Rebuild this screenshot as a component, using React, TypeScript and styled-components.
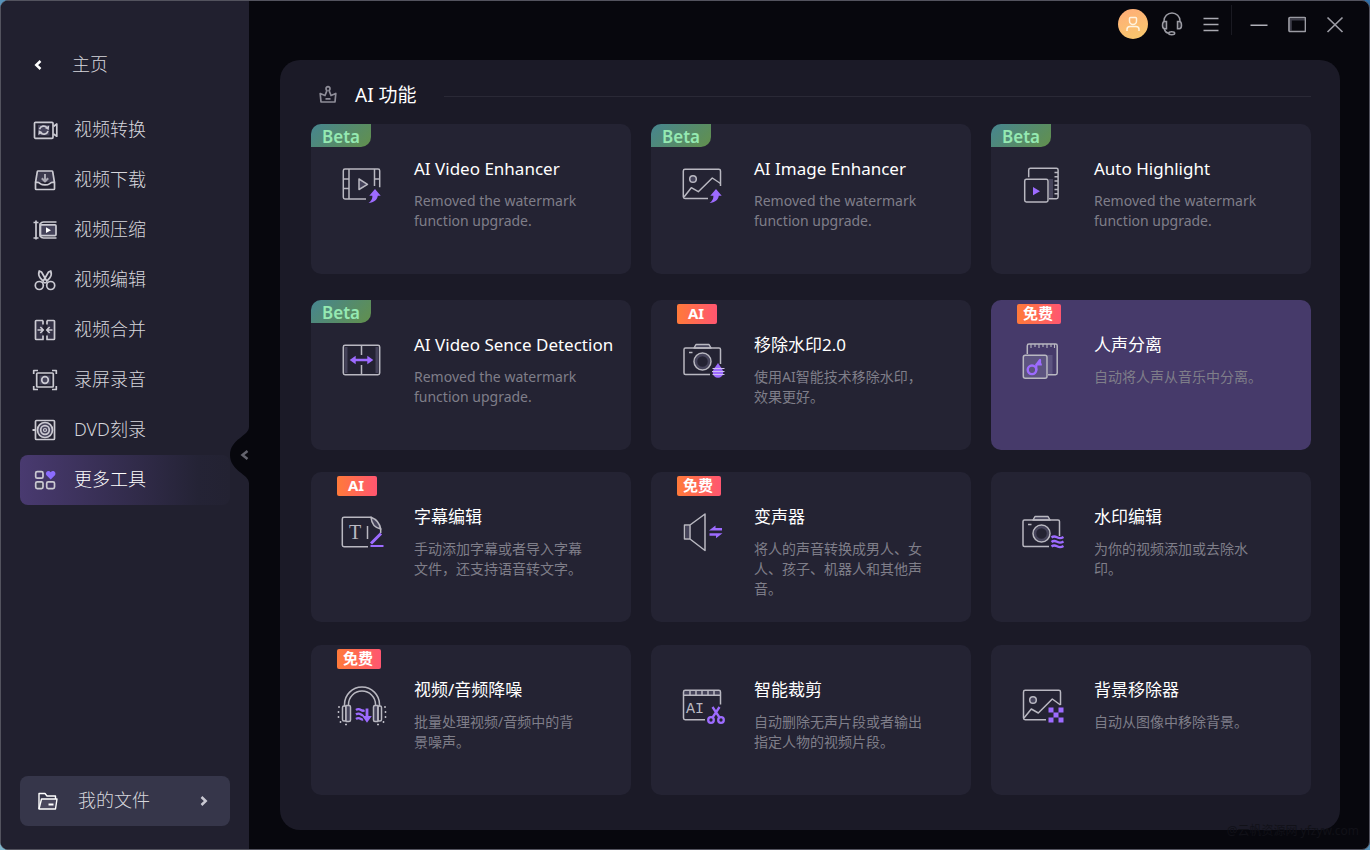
import React from "react";
import styled, { createGlobalStyle, css } from "styled-components";

const GlobalStyle = createGlobalStyle`
  *, *::before, *::after { box-sizing: border-box; }
  body {
    margin: 0;
    background: linear-gradient(to top right, #7fb6cc, #2f6fa8);
    font-family: "Noto Sans", "Noto Sans CJK SC", sans-serif;
    color: #d6d6dc;
  }
  button { font: inherit; color: inherit; border: 0; padding: 0; background: none; cursor: pointer; text-align: left; }
  ul { list-style: none; margin: 0; padding: 0; }
  svg { display: block; flex: none; }
`;

const Window = styled.div`
  position: relative;
  display: flex;
  min-height: 100vh;
  border: 1px solid #53535e;
  border-radius: 8px;
  background: #07070d;
  overflow: hidden;
`;

/* ---------- sidebar ---------- */

const Sidebar = styled.aside`
  position: relative;
  display: flex;
  flex: none;
  flex-direction: column;
  width: 248px;
  padding: 39px 19px 23px;
  background: #21202f;
`;

const HomeButton = styled.button`
  display: flex;
  align-items: center;
  gap: 28px;
  height: 50px;
  margin-bottom: 15px;
  padding-left: 12px;
  font-size: 18px;
  font-weight: 300;
`;

const NavList = styled.ul`
  display: flex;
  flex-direction: column;
`;

const NavButton = styled.button<{ $active?: boolean }>`
  display: flex;
  align-items: center;
  gap: 16px;
  width: 100%;
  height: 50px;
  padding-left: 12px;
  border-radius: 8px;
  font-size: 18px;
  font-weight: 300;
  ${(p) =>
    p.$active &&
    css`
      color: #fff;
      background: linear-gradient(90deg, #493a70 0%, #242335 85%, #232232 100%);
    `}
`;

const NavLabel = styled.span`
  line-height: 24px;
  padding-bottom: 2px;
`;

const FilesButton = styled.button`
  display: flex;
  align-items: center;
  height: 50px;
  margin-top: auto;
  padding: 0 20px 0 16px;
  gap: 18px;
  border-radius: 8px;
  background: #36364a;
  font-size: 18px;
  font-weight: 300;
`;

const FilesLabel = styled(NavLabel)`
  flex: 1;
`;

const CollapseButton = styled.button`
  position: absolute;
  top: 426px;
  right: 0;
`;

/* ---------- main area ---------- */

const Main = styled.main`
  display: flex;
  flex: 1;
  flex-direction: column;
  min-width: 0;
  padding: 0 29px 19px 31px;
`;

const TopBar = styled.header`
  display: flex;
  justify-content: flex-end;
  height: 59px;
  padding-top: 8px;
  margin-right: -10px;
`;

const ControlGroup = styled.div<{ $gap: number }>`
  display: flex;
  gap: ${(p) => p.$gap}px;
`;

const ControlButton = styled.button`
  display: flex;
  align-items: center;
  justify-content: center;
  width: 30px;
  height: 30px;
`;

const Avatar = styled(ControlButton)`
  border-radius: 50%;
  background: linear-gradient(160deg, #ffac78, #f8ca6c);
`;

const Divider = styled.span`
  width: 1px;
  height: 30px;
  margin: -4px 12px 0 5px;
  background: #1a1a22;
`;

const Panel = styled.section`
  flex: 1;
  padding: 0 29px 35px 31px;
  border-radius: 20px;
  background: #1b1a27;
`;

const PanelHeader = styled.div`
  display: flex;
  align-items: center;
  height: 64px;
  padding: 6px 0 0 7px;
`;

const PanelTitle = styled.h1`
  margin: 0 27px 0 17px;
  font-size: 19px;
  line-height: 28px;
  font-weight: 400;
  color: #fff;
`;

const Rule = styled.span`
  flex: 1;
  height: 1px;
  margin-top: 2px;
  background: #2a2936;
`;

const CardGrid = styled.ul`
  display: grid;
  grid-template-columns: repeat(3, minmax(0, 1fr));
  grid-template-rows: 176px 172px 173px auto;
  column-gap: 20px;
  align-items: start;
`;

const Card = styled.button<{ $highlighted?: boolean }>`
  position: relative;
  display: flex;
  align-items: flex-start;
  gap: 28px;
  width: 100%;
  height: 150px;
  padding: 33px 0 0 27px;
  border-radius: 10px;
  background: ${(p) => (p.$highlighted ? "#463a6a" : "#242333")};
`;

const IconSlot = styled.span`
  padding-top: 4px;
`;

const CardText = styled.span`
  display: flex;
  flex-direction: column;
  gap: 10px;
`;

const CardTitle = styled.span`
  font-size: 17px;
  line-height: 24px;
  color: #fff;
  white-space: nowrap;
`;

const CardDescription = styled.span`
  max-width: 170px;
  font-size: 14px;
  line-height: 20px;
  color: #7f7e89;
`;

const BetaBadge = styled.span`
  position: absolute;
  top: 0;
  left: 0;
  width: 60px;
  height: 23px;
  border-radius: 10px 0 10px 0;
  background: linear-gradient(135deg, #468590, #62904c);
  color: #95e9b2;
  font-size: 17px;
  line-height: 26px;
  font-weight: 600;
  text-align: center;
`;

const TagBadge = styled.span<{ $wide: boolean }>`
  position: absolute;
  top: 4px;
  left: 26px;
  width: ${(p) => (p.$wide ? 44 : 40)}px;
  height: 20px;
  padding-right: 2px;
  border-radius: 2px;
  background: linear-gradient(90deg, #ff7a3a, #ff5670);
  color: #fff;
  font-size: 15px;
  line-height: 18px;
  font-weight: 700;
  text-align: center;
`;

const Credit = styled.span`
  position: absolute;
  right: 10px;
  bottom: 9px;
  font-size: 12px;
  line-height: 18px;
  color: #111118;
`;

/* ---------- icons ---------- */

const LINE = "#b9b8c1";
const PURPLE = "#9d6bff";
const SHADE = "#45435a";

const NavSvg = ({ children }: { children: React.ReactNode }) => (
  <svg width="26" height="26" viewBox="0 0 26 26" fill="none" stroke="#cbcad2" strokeWidth="1.7" strokeLinejoin="round" aria-hidden="true">
    {children}
  </svg>
);

const ToolSvg = ({ children }: { children: React.ReactNode }) => (
  <svg width="48" height="48" viewBox="0 0 48 48" fill="none" stroke={LINE} strokeWidth="1.5" strokeLinejoin="round" overflow="visible" aria-hidden="true">
    {children}
  </svg>
);

const navIcons = {
  convert: (
    <NavSvg>
      <rect x="2.5" y="5.3" width="18.5" height="16" rx="1" />
      <rect x="6" y="8" width="11.5" height="10.5" fill={SHADE} stroke="none" />
      <path d="M21.5 9.5L24.8 7v12.2L21.5 17" />
      <path d="M7.5 12.2a4.3 4.3 0 0 1 7.6-1.4M16 14a4.3 4.3 0 0 1-7.6 1.4" />
      <path d="M17.2 8.5l-.5 4.6-3.9-2zM6.3 17.900l.5-4.600 3.900 2z" fill="#cbcad2" stroke="none" />
    </NavSvg>
  ),
  download: (
    <NavSvg>
      <path d="M3.6 15L5.3 4.6c.1-.5.3-.6.8-.6h13.800c.5 0 .7.1.8.6L22.400 15" fill="#3b394d" />
      <path d="M3.5 15.2c3 0 3.7.2 5.2 1.7 1.5 1.4 7 1.4 8.600 0 1.500-1.500 2.200-1.700 5.200-1.700v6.500c0 .5-.3.8-.8.8H4.300c-.5 0-.8-.3-.8-.8z" fill="#21202f" />
      <path d="M13 7v7M9.800 11.300l3.200 3.200 3.200-3.200" stroke="#a9a8b3" strokeWidth="2" />
    </NavSvg>
  ),
  compress: (
    <NavSvg>
      <path d="M1.500 5.500h5M1.500 21h5M4 3.500v19" />
      <path d="M24.500 5h-13Q9.500 5 8 7v12q1.500 2 3.500 2h13" />
      <rect x="8.500" y="7.800" width="15.500" height="10.800" rx="1" fill={SHADE} />
      <path d="M14 10.300v5.800l5-2.900z" fill="#fff" stroke="none" />
    </NavSvg>
  ),
  edit: (
    <NavSvg>
      <circle cx="7.300" cy="18.500" r="4" />
      <circle cx="18.700" cy="18.500" r="4" />
      <path d="M10.300 15.700l6.200-10.700 2.300-1c1 2.800.5 5-1.200 7.200l-4.600 5M15.700 15.700L9.500 5l-2.300-1c-1 2.800-.5 5 1.200 7.200l4.600 5" />
    </NavSvg>
  ),
  merge: (
    <NavSvg>
      <path d="M11 3.500H4.300c-.5 0-.8.3-.8.8v17.400c0 .5.3.8.8.8H11v-4M11 3.500v4M15 3.500h6.700c.5 0 .8.3.8.8v17.400c0 .5-.3.8-.8.8H15v-4M15 3.500v4" fill="#343246" />
      <path d="M5.500 13h5M8.300 10l3 3-3 3M20.500 13h-5M17.700 10l-3 3 3 3" />
    </NavSvg>
  ),
  record: (
    <NavSvg>
      <path d="M1.700 7V3.500H6M20 3.500h4.300V7M24.300 19v3.500H20M6 22.500H1.700V19" />
      <rect x="4.700" y="6" width="16.600" height="14" rx="1" />
      <rect x="7.500" y="8.500" width="11" height="9" fill={SHADE} stroke="none" />
      <circle cx="13" cy="13" r="3.300" />
    </NavSvg>
  ),
  disc: (
    <NavSvg>
      <rect x="3.500" y="3.500" width="19" height="19" rx="1" />
      <path d="M.5 13h3" strokeWidth="2" />
      <circle cx="13" cy="13" r="7.500" fill={SHADE} />
      <circle cx="13" cy="13" r="4.300" />
      <circle cx="13" cy="13" r="1.500" strokeWidth="1.200" />
    </NavSvg>
  ),
  more: (
    <NavSvg>
      <rect x="3.700" y="4.700" width="7.300" height="6.500" rx="1.500" />
      <rect x="3.700" y="14.800" width="7.300" height="6.800" rx="1.500" fill={SHADE} />
      <rect x="14.700" y="14.800" width="7.800" height="6.800" rx="1.500" />
      <path d="M18.700 12.600l-4-4c-2.500-3 1.700-6.400 4-3.300 2.300-3.100 6.500.3 4 3.300z" fill="#8b6cff" stroke="none" />
    </NavSvg>
  ),
};

const UpArrow = () => (
  <path d="M37 28l5.700 6.800h-2.900c-.5 4-3.800 6.700-9.200 7.200 2.700-1.800 3.900-4.200 3.800-7.200h-3.100z" fill={PURPLE} stroke="none" />
);

const Camera = () => (
  <>
    <path d="M16 11l2-3.500h13l2 3.500z" fill={SHADE} />
    <path d="M42.500 27V12.500c0-1-.5-1.500-1.500-1.500H7.500c-1 0-1.500.5-1.500 1.500V36c0 1 .5 1.500 1.500 1.500H32" />
    <circle cx="24.500" cy="24.500" r="6.500" stroke={SHADE} strokeWidth="2.500" />
    <circle cx="24.500" cy="24.500" r="8.500" />
    <path d="M11 15.500h3.500" />
  </>
);

const toolIcons = {
  videoEnhancer: (
    <ToolSvg>
      <path d="M28 38H7c-1 0-1.700-.7-1.700-1.700V9.700C5.300 8.700 6 8 7 8h33c1 0 1.700.7 1.700 1.700v16.500" />
      <path d="M11 8v30M36.500 8v17M5.300 18H11M5.300 27.500H11M36.500 18h5" />
      <path d="M21 18v10.500l8.500-5.200z" fill={SHADE} />
      <UpArrow />
    </ToolSvg>
  ),
  imageEnhancer: (
    <ToolSvg>
      <path d="M30 37.500H7c-1 0-1.700-.7-1.700-1.700V10c0-1 .7-1.700 1.700-1.700h33.800c1 0 1.700.7 1.700 1.700v15" />
      <circle cx="15" cy="18" r="3.300" fill={SHADE} />
      <path d="M6 36l7.300-9.300 7 4L34.300 17l8.200 5.500" />
      <g transform="translate(1 0)">
        <UpArrow />
      </g>
    </ToolSvg>
  ),
  highlight: (
    <ToolSvg>
      <rect x="31" y="18" width="4" height="19" fill={SHADE} stroke="none" />
      <path d="M10.700 16.300V9c0-1 .7-1.700 1.700-1.700h26c1 0 1.700.7 1.700 1.700v27c0 1-.7 1.700-1.700 1.700H31" />
      <path d="M36.500 11.500H40M36.500 15.800H40M36.500 20H40M36.500 24.300H40M36.500 28.500H40M36.500 32.800H40" />
      <rect x="6.700" y="18.300" width="23.300" height="22.700" rx="1.700" />
      <path d="M15 26v8.300l7-4.100z" fill={PURPLE} stroke="none" />
    </ToolSvg>
  ),
  detection: (
    <ToolSvg>
      <path d="M8 10v26M39 10v26" stroke={SHADE} strokeWidth="3" />
      <rect x="5.300" y="8.300" width="36.400" height="29.400" rx="1.700" />
      <path d="M23.500 8.300V18M23.500 28v9.700" />
      <path d="M11.700 23l6-4.300v3h11.600v-3l6 4.300-6 4.300v-3H17.700v3z" fill={PURPLE} stroke="none" />
    </ToolSvg>
  ),
  watermarkRemove: (
    <ToolSvg>
      <Camera />
      <path d="M40 26c2 3.300 5.300 6.500 5.300 9.500a5.300 5.300 0 0 1-10.600 0C34.700 32.500 38 29.300 40 26z" fill={PURPLE} stroke="none" />
      <path d="M34.500 31.500h12M34 34.500h12.500M34.500 37.500h12" strokeWidth="1.100" stroke="#cdbcf2" />
    </ToolSvg>
  ),
  vocals: (
    <ToolSvg>
      <rect x="29.500" y="18" width="5" height="19" fill="#5d5480" stroke="none" />
      <path d="M9.300 17V8.700C9.300 7.700 10 7 11 7h26.500c1 0 1.700.7 1.700 1.700V36c0 1-.7 1.700-1.700 1.700H30" />
      <path d="M13 7v4M17 7v3M21 7v4M25 7v3M29 7v4M33 7v3M36.500 7v4" strokeWidth="1.100" />
      <rect x="5.300" y="18.300" width="23.700" height="22.900" rx="2" fill="#5d5480" />
      <circle cx="14" cy="32.800" r="4.300" stroke={PURPLE} strokeWidth="2.400" />
      <path d="M18.300 33.500V27.500h5.500M18.300 28l3.700-5v5" stroke={PURPLE} strokeWidth="2.200" />
    </ToolSvg>
  ),
  subtitle: (
    <ToolSvg>
      <path d="M30 37.700H6c-1 0-1.700-.7-1.700-1.700V10c0-1 .7-1.700 1.700-1.700h27L42.700 20v4" />
      <path d="M33 8.300c.5 6 3.500 10.500 9.700 11.700-1-5.500-4-9.500-9.700-11.700z" fill={SHADE} />
      <text x="11" y="30" fontFamily="Liberation Serif, serif" fontSize="20" fill={LINE} stroke="none">T</text>
      <path d="M29.500 17v13" />
      <path d="M33 34.500l10-10" stroke={PURPLE} strokeWidth="3" />
      <path d="M32.500 37h13" stroke={PURPLE} strokeWidth="2" />
    </ToolSvg>
  ),
  voiceChanger: (
    <ToolSvg>
      <path d="M9.500 17v12" stroke={SHADE} strokeWidth="3" />
      <path d="M12 16v14H6.500V16zM12 16L27 5v36.500L12 30" />
      <path d="M31 21.500l6.500-5V19H44v2.500zM44.500 24.300l-6.500 5v-2.500h-6.500v-2.500z" fill={PURPLE} stroke="none" />
    </ToolSvg>
  ),
  watermarkEdit: (
    <ToolSvg>
      <g transform="translate(-1 0)">
        <Camera />
      </g>
      <path d="M33.500 28.500c2.500-2 4-1 6 0s3.500 1 6-.5M33.500 33c2.500-2 4-1 6 0s3.500 1 6-.5M33.500 37.500c2.500-2 4-1 6 0s3.500 1 6-.5" stroke={PURPLE} strokeWidth="2.400" />
    </ToolSvg>
  ),
  denoise: (
    <ToolSvg>
      <path d="M6.500 24v-1.500a17.500 17.500 0 0 1 35 0V24M10.500 24v-1.500a13.500 13.500 0 0 1 27 0V24" />
      <rect x="4.500" y="24" width="3.500" height="15" rx="1.500" />
      <path d="M8 23.500h3c1 0 1.500.5 1.500 1.500v13c0 1-.5 1.500-1.500 1.500H8zM40 23.500h-3c-1 0-1.500.5-1.500 1.500v13c0 1 .5 1.500 1.500 1.500h3z" fill={SHADE} />
      <rect x="40" y="24" width="3.500" height="15" rx="1.500" />
      <path d="M1 24v2M.5 29v2M.5 34v2M2.500 39v2M47 24v2M47.500 29v2M47.500 34v2M45.500 39v2M7 42.500h2M39 42.500h2" />
      <path d="M18 28c2-1.500 3.500-1 5 0s2.500.8 3.500.3M18 32.500c2-1.500 3.500-1 5 0s2 .8 2.500.3M18 37c2-1.500 3.500-1 5 0s1.500.6 2 .4" stroke={PURPLE} strokeWidth="2.400" />
      <path d="M27.600 26.500V34h-3.400l4.800 6.700 4.800-6.700h-3.400v-7.500z" fill={PURPLE} stroke="none" />
    </ToolSvg>
  ),
  smartCrop: (
    <ToolSvg>
      <rect x="6" y="9" width="36" height="4" fill={SHADE} stroke="none" />
      <path d="M27 37.700H7.200c-1 0-1.700-.7-1.700-1.700V10c0-1 .7-1.700 1.700-1.700h33.600c1 0 1.700.7 1.700 1.700v12.500" />
      <path d="M5.500 13.300h37M12 8.300v5M18 8.300v5M24 8.300v5M30 8.300v5M36 8.300v5" />
      <text x="8" y="31" fontFamily="Liberation Mono, monospace" fontSize="15" fill={LINE} stroke="none">AI</text>
      <circle cx="33" cy="38" r="2.800" stroke={PURPLE} strokeWidth="2.300" />
      <circle cx="43" cy="38" r="2.800" stroke={PURPLE} strokeWidth="2.300" />
      <path d="M34.500 35.500L41.500 25M41.500 35.500L34.500 25" stroke={PURPLE} strokeWidth="2.300" />
    </ToolSvg>
  ),
  background: (
    <ToolSvg>
      <path d="M28 37.700H7.200c-1 0-1.700-.7-1.700-1.700V10c0-1 .7-1.700 1.700-1.700h33.600c1 0 1.700.7 1.700 1.700v13" />
      <circle cx="15" cy="18" r="3.300" fill={SHADE} />
      <path d="M6 36l7.300-9 7 4L34.300 17l8.200 6" />
      <path d="M30.500 25.500h5v5h-5zM40.500 25.500h5v5h-5zM35.500 30.500h5v5h-5zM30.500 35.500h5v5h-5zM40.500 35.500h5v5h-5z" fill={PURPLE} stroke="none" />
    </ToolSvg>
  ),
};

/* ---------- data ---------- */

const navItems: { label: string; icon: keyof typeof navIcons; active?: boolean }[] = [
  { label: "视频转换", icon: "convert" },
  { label: "视频下载", icon: "download" },
  { label: "视频压缩", icon: "compress" },
  { label: "视频编辑", icon: "edit" },
  { label: "视频合并", icon: "merge" },
  { label: "录屏录音", icon: "record" },
  { label: "DVD刻录", icon: "disc" },
  { label: "更多工具", icon: "more", active: true },
];

type Tool = {
  title: string;
  text: string;
  icon: keyof typeof toolIcons;
  badge?: "Beta" | "AI" | "免费";
  highlighted?: boolean;
};

const tools: Tool[] = [
  { title: "AI Video Enhancer", text: "Removed the watermark function upgrade.", icon: "videoEnhancer", badge: "Beta" },
  { title: "AI Image Enhancer", text: "Removed the watermark function upgrade.", icon: "imageEnhancer", badge: "Beta" },
  { title: "Auto Highlight", text: "Removed the watermark function upgrade.", icon: "highlight", badge: "Beta" },
  { title: "AI Video Sence Detection", text: "Removed the watermark function upgrade.", icon: "detection", badge: "Beta" },
  { title: "移除水印2.0", text: "使用AI智能技术移除水印，效果更好。", icon: "watermarkRemove", badge: "AI" },
  { title: "人声分离", text: "自动将人声从音乐中分离。", icon: "vocals", badge: "免费", highlighted: true },
  { title: "字幕编辑", text: "手动添加字幕或者导入字幕文件，还支持语音转文字。", icon: "subtitle", badge: "AI" },
  { title: "变声器", text: "将人的声音转换成男人、女人、孩子、机器人和其他声音。", icon: "voiceChanger", badge: "免费" },
  { title: "水印编辑", text: "为你的视频添加或去除水印。", icon: "watermarkEdit" },
  { title: "视频/音频降噪", text: "批量处理视频/音频中的背景噪声。", icon: "denoise", badge: "免费" },
  { title: "智能裁剪", text: "自动删除无声片段或者输出指定人物的视频片段。", icon: "smartCrop" },
  { title: "背景移除器", text: "自动从图像中移除背景。", icon: "background" },
];

const ToolCard = ({ tool }: { tool: Tool }) => (
  <Card type="button" $highlighted={tool.highlighted}>
    {tool.badge === "Beta" && <BetaBadge>Beta</BetaBadge>}
    {tool.badge && tool.badge !== "Beta" && <TagBadge $wide={tool.badge === "免费"}>{tool.badge}</TagBadge>}
    <IconSlot>{toolIcons[tool.icon]}</IconSlot>
    <CardText>
      <CardTitle>{tool.title}</CardTitle>
      <CardDescription>{tool.text}</CardDescription>
    </CardText>
  </Card>
);

export default function App() {
  return (
    <>
      <GlobalStyle />
      <Window lang="zh-CN">
        <Sidebar>
          <HomeButton type="button">
            <svg width="12" height="12" viewBox="0 0 12 12" fill="none" stroke="#fff" strokeWidth="2.500" aria-hidden="true">
              <path d="M8.500 2L4.300 6l4.200 4" />
            </svg>
            <NavLabel>主页</NavLabel>
          </HomeButton>
          <nav>
            <NavList>
              {navItems.map((item) => (
                <li key={item.label}>
                  <NavButton type="button" $active={item.active} aria-current={item.active ? "page" : undefined}>
                    {navIcons[item.icon]}
                    <NavLabel>{item.label}</NavLabel>
                  </NavButton>
                </li>
              ))}
            </NavList>
          </nav>
          <FilesButton type="button">
            <svg width="24" height="24" viewBox="0 0 24 24" fill="none" stroke="#fff" strokeWidth="1.400" strokeLinejoin="round" aria-hidden="true">
              <path d="M3 20V4.500h6l2 2.500h8.500v3" />
              <path d="M3 20l2.500-10h15.500l-1.500 10z" fill="#4a485e" />
              <path d="M12.500 15.500h5" strokeWidth="2" />
            </svg>
            <FilesLabel>我的文件</FilesLabel>
            <svg width="12" height="12" viewBox="0 0 12 12" fill="none" stroke="#c9c8d2" strokeWidth="2.500" aria-hidden="true">
              <path d="M3.500 2l4.200 4-4.200 4" />
            </svg>
          </FilesButton>
          <CollapseButton type="button" aria-label="收起侧栏">
            <svg width="19" height="56" viewBox="0 0 19 56" aria-hidden="true">
              <path d="M19 0C19 9 0 12 0 28s19 19 19 28z" fill="#07070d" />
              <path d="M17.500 24l-5 4 5 4" fill="none" stroke="#63636d" strokeWidth="2.500" />
            </svg>
          </CollapseButton>
        </Sidebar>

        <Main>
          <TopBar>
            <ControlGroup $gap={9}>
              <Avatar type="button" aria-label="账户">
                <svg width="16" height="16" viewBox="0 0 16 16" fill="none" stroke="#fff3df" strokeWidth="1.500" aria-hidden="true">
                  <path d="M5.500 1.500h5a1 1 0 0 1 1 1V5a3.500 3.500 0 0 1-7 0V2.500a1 1 0 0 1 1-1z" />
                  <path d="M2 15v-1.500c0-2 1.200-3 3-3h6c1.800 0 3 1 3 3V15" />
                </svg>
              </Avatar>
              <ControlButton type="button" aria-label="客服">
                <svg width="24" height="24" viewBox="0 0 24 24" fill="none" stroke="#9b9ba3" strokeWidth="1.500" aria-hidden="true">
                  <path d="M4 9.500V9a8 8 0 0 1 16 0v.5" />
                  <path d="M6.500 9.500H4.700c-1.500 0-2.200 1.800-2.200 3.700s.7 3.600 2.200 3.600h1.800zM17.500 9.500h1.800c1.500 0 2.200 1.800 2.200 3.700s-.7 3.600-2.200 3.600h-1.800z" fill="#26262e" />
                  <path d="M4.300 17c.5 2.300 1.900 3.800 4.200 4.200" />
                  <ellipse cx="11.700" cy="21.300" rx="3" ry="1.500" />
                </svg>
              </ControlButton>
              <ControlButton type="button" aria-label="菜单">
                <svg width="16" height="16" viewBox="0 0 16 16" stroke="#a9a9b1" strokeWidth="1.500" aria-hidden="true">
                  <path d="M.5 2.500h15M.5 8.500h15M.5 14.500h15" />
                </svg>
              </ControlButton>
            </ControlGroup>
            <Divider />
            <ControlGroup $gap={8}>
              <ControlButton type="button" aria-label="最小化">
                <svg width="18" height="18" viewBox="0 0 18 18" stroke="#b0b0b8" strokeWidth="1.600" aria-hidden="true">
                  <path d="M.5 10.300h17" />
                </svg>
              </ControlButton>
              <ControlButton type="button" aria-label="最大化">
                <svg width="18" height="18" viewBox="0 0 18 18" fill="none" aria-hidden="true">
                  <path d="M2.800 15.500V4.500H17" stroke="#3c3c48" strokeWidth="2" />
                  <rect x="1" y="2.500" width="16.500" height="14" rx="1" stroke="#9b9ba3" strokeWidth="1.700" />
                </svg>
              </ControlButton>
              <ControlButton type="button" aria-label="关闭">
                <svg width="18" height="18" viewBox="0 0 18 18" stroke="#9b9ba3" strokeWidth="1.700" aria-hidden="true">
                  <path d="M1.500 2.500l15 14.500M16.500 2.500l-15 14.500" />
                </svg>
              </ControlButton>
            </ControlGroup>
          </TopBar>

          <Panel>
            <PanelHeader>
              <svg width="20" height="20" viewBox="0 0 20 20" fill="none" stroke="#8e8d98" strokeWidth="1.700" strokeLinejoin="round" aria-hidden="true">
                <path d="M3 17L2.200 8.500l4.800 2 2-5.100a2 2 0 1 1 2 0l2 5.100 4.800-2L17 17z" />
                <path d="M7.500 13.800h5" />
              </svg>
              <PanelTitle>AI 功能</PanelTitle>
              <Rule />
            </PanelHeader>
            <CardGrid>
              {tools.map((tool) => (
                <li key={tool.title}>
                  <ToolCard tool={tool} />
                </li>
              ))}
            </CardGrid>
          </Panel>
        </Main>
        <Credit>@云帆资源网 yfzyw.com</Credit>
      </Window>
    </>
  );
}
